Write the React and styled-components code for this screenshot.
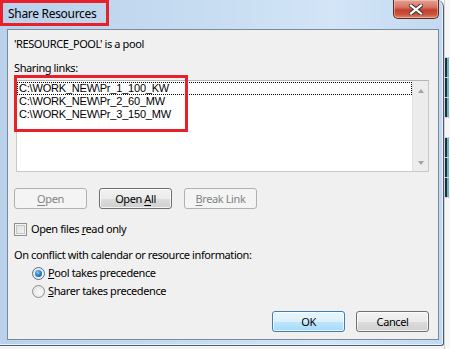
import React from "react";
import styled, { createGlobalStyle } from "styled-components";

const GlobalStyle = createGlobalStyle`
  html, body {
    margin: 0;
    padding: 0;
    background: #ececec;
  }
  * {
    box-sizing: border-box;
  }
`;

const links = ["C:\\WORK_NEW\\Pr_1_100_KW", "C:\\WORK_NEW\\Pr_2_60_MW", "C:\\WORK_NEW\\Pr_3_150_MW"];

function Mn({ children }) {
  return <u>{children}</u>;
}

export default function App() {
  return (
    <Page>
      <GlobalStyle />
      <Window>
        <TitleBar>
          <Title>Share Resources</Title>
          <CloseButton>
            <svg width="14" height="11" viewBox="0 0 14 11">
              <path
                d="M2 1.5 L12 9.5 M12 1.5 L2 9.5"
                stroke="#3b3b3b"
                strokeWidth="4.2"
                strokeLinecap="square"
              />
              <path
                d="M2 1.5 L12 9.5 M12 1.5 L2 9.5"
                stroke="#ffffff"
                strokeWidth="2.2"
                strokeLinecap="square"
              />
            </svg>
          </CloseButton>
        </TitleBar>
        <Client>
          <Label $top={6}>'RESOURCE_POOL' is a pool</Label>
          <Label $top={8}>Sharing links:</Label>
          <ListBox>
            <Items>
              {links.map((l, i) => (
                <Item key={l} $focused={i === 0}>
                  {l}
                </Item>
              ))}
            </Items>
            <ScrollBar>
              <Arrow $dir="up" />
              <Arrow $dir="down" />
            </ScrollBar>
            <ListHighlight />
          </ListBox>
          <ButtonRow>
            <Button disabled>
              <span>
                <Mn>O</Mn>pen
              </span>
            </Button>
            <Button>
              <span>
                Open <Mn>A</Mn>ll
              </span>
            </Button>
            <Button disabled>
              <span>
                <Mn>B</Mn>reak Link
              </span>
            </Button>
          </ButtonRow>
          <CheckRow>
            <CheckBox />
            <span>
              Open files <Mn>r</Mn>ead only
            </span>
          </CheckRow>
          <Label $top={10}>On conflict with calendar or resource information:</Label>
          <RadioGroup>
            <RadioRow>
              <Radio $checked />
              <span>
                <Mn>P</Mn>ool takes precedence
              </span>
            </RadioRow>
            <RadioRow>
              <Radio />
              <span>
                <Mn>S</Mn>harer takes precedence
              </span>
            </RadioRow>
          </RadioGroup>
          <Footer>
            <Button $default>
              <span>OK</span>
            </Button>
            <Button>
              <span>Cancel</span>
            </Button>
          </Footer>
        </Client>
      </Window>
      <Side>
        <SideCell />
        <SideCell $mark />
        <SideCell $mark />
        <SideCell $mark />
        <SideCell />
        <SideCell $mark />
        <SideCell $mark />
        <SideCell $mark />
      </Side>
      <TitleHighlight />
    </Page>
  );
}

const Page = styled.div`
  position: relative;
  width: 450px;
  height: 349px;
  overflow: hidden;
  display: flex;
  align-items: flex-start;
  background: #f4f4f4;
  font-family: "Noto Sans", "Open Sans", sans-serif;
  font-size: 11px;
  letter-spacing: -0.4px;
  color: #000;
`;

const Window = styled.div`
  width: 444px;
  height: 346px;
  flex-shrink: 0;
  display: flex;
  flex-direction: column;
  padding: 0 4px 5px 7px;
  background: linear-gradient(90deg, #b9d1ea 0%, #c6dcf1 45%, #d3e5f7 75%, #c2d9f1 100%);
  border-right: 1px solid #4d5e70;
  border-bottom: 1px solid #4d5e70;
  border-top-right-radius: 7px;
  border-bottom-right-radius: 3px;
  box-shadow: inset -1px 0 0 #e6f0fa, inset 0 -1px 0 #e6f0fa;
`;

const TitleBar = styled.div`
  height: 29px;
  display: flex;
  justify-content: space-between;
  align-items: flex-start;
`;

const Title = styled.div`
  margin: 6px 0 0 1px;
  font-size: 12px;
  letter-spacing: -0.3px;
  line-height: 16px;
  color: #000;
`;

const CloseButton = styled.div`
  width: 46px;
  height: 19px;
  display: flex;
  align-items: center;
  justify-content: center;
  border: 1px solid #5a2a22;
  border-top: none;
  border-radius: 0 0 5px 5px;
  background: linear-gradient(180deg, #e3a193 0%, #d57564 40%, #c4412b 55%, #c9523b 80%, #e08a6e 100%);
  box-shadow: inset 0 0 0 1px rgba(255, 210, 200, 0.5);
`;

const Client = styled.div`
  flex: 1;
  display: flex;
  flex-direction: column;
  padding: 0 9px 0 6px;
  background: #f0f0f0;
  border: 1px solid #7b8a99;
`;

const Label = styled.div`
  margin-top: ${(p) => p.$top}px;
  height: 16px;
  line-height: 16px;
  white-space: nowrap;
`;

const ListBox = styled.div`
  position: relative;
  margin: 4px 0 0 2px;
  height: 92px;
  display: flex;
  background: #fff;
  border: 1px solid #c9c9c9;
  border-top-color: #b5b5b5;
`;

const Items = styled.div`
  flex: 1;
  padding-top: 1px;
  font-family: "Liberation Sans", Arial, sans-serif;
  font-size: 11px;
  letter-spacing: -0.2px;
`;

const Item = styled.div`
  height: 13px;
  line-height: 13px;
  padding-left: 2px;
  outline: ${(p) => (p.$focused ? "1px dotted #000" : "none")};
  outline-offset: -1px;
`;

const ScrollBar = styled.div`
  width: 16px;
  display: flex;
  flex-direction: column;
  justify-content: space-between;
  align-items: center;
  padding: 8px 0 6px;
  background: #ececec;
  border-left: 1px solid #e2e2e2;
`;

const Arrow = styled.div`
  width: 0;
  height: 0;
  border-left: 3.5px solid transparent;
  border-right: 3.5px solid transparent;
  ${(p) =>
    p.$dir === "up"
      ? "border-bottom: 4px solid #a3a3a3;"
      : "border-top: 4px solid #a3a3a3;"}
`;

const ListHighlight = styled.div`
  position: absolute;
  left: -3px;
  top: -6px;
  width: 174px;
  height: 57px;
  border: 3px solid #e8202a;
`;

const TitleHighlight = styled.div`
  position: absolute;
  left: 0;
  top: 0;
  width: 109px;
  height: 26px;
  border: 3px solid #e8202a;
`;

const ButtonRow = styled.div`
  margin-top: 16px;
  display: flex;
  gap: 12px;
`;

const Button = styled.div`
  width: 73px;
  height: 21px;
  display: flex;
  align-items: center;
  justify-content: center;
  border-radius: 3px;
  white-space: nowrap;
  line-height: 16px;
  border: 1px solid ${(p) => (p.disabled ? "#adb2b5" : p.$default ? "#3c7fb1" : "#707070")};
  color: ${(p) => (p.disabled ? "#838383" : "#000")};
  background: ${(p) =>
    p.disabled
      ? "#f4f4f4"
      : p.$default
      ? "linear-gradient(180deg, #eaf6fd 0%, #d9f0fc 50%, #bee6fd 51%, #a7d9f5 100%)"
      : "linear-gradient(180deg, #f2f2f2 0%, #ebebeb 50%, #dddddd 51%, #cfcfcf 100%)"};
  box-shadow: ${(p) =>
    p.disabled ? "none" : "inset 0 0 0 1px rgba(255, 255, 255, 0.75)"};

  u {
    text-underline-offset: 2px;
  }
`;

const CheckRow = styled.div`
  margin-top: 12px;
  height: 16px;
  display: flex;
  align-items: center;
  gap: 4px;
  line-height: 16px;
`;

const CheckBox = styled.div`
  width: 13px;
  height: 13px;
  border: 1px solid #8e8f8f;
  background: linear-gradient(135deg, #dcdcdc 0%, #f6f6f6 100%);
  box-shadow: inset 0 0 0 1px #f4f4f4, inset 0 0 0 2px #c6c6c6;
`;

const RadioGroup = styled.div`
  display: flex;
  flex-direction: column;
  gap: 2px;
  margin-top: 2px;
  padding-left: 18px;
`;

const RadioRow = styled.div`
  height: 16px;
  display: flex;
  align-items: center;
  gap: 3px;
  line-height: 16px;
`;

const Radio = styled.div`
  position: relative;
  width: 13px;
  height: 13px;
  border-radius: 50%;
  border: 1px solid ${(p) => (p.$checked ? "#4f7396" : "#8e8f8f")};
  background: radial-gradient(circle at 60% 60%, #fafafa 0%, #dedede 100%);

  &::after {
    content: "";
    display: ${(p) => (p.$checked ? "block" : "none")};
    position: absolute;
    left: 2px;
    top: 2px;
    width: 7px;
    height: 7px;
    border-radius: 50%;
    background: radial-gradient(circle at 40% 35%, #7ec8f2 0%, #1f70b8 60%, #174c82 100%);
  }
`;

const Footer = styled.div`
  margin-top: 12px;
  display: flex;
  justify-content: flex-end;
  gap: 11px;
`;

const Side = styled.div`
  flex: 1;
  height: 349px;
  display: flex;
  flex-direction: column;
  padding-top: 38px;
  background: #f7f7f7;
  border-left: 1px solid #d0d0d0;
`;

const SideCell = styled.div`
  height: 20px;
  border-bottom: 1px solid #d6d6d6;
  background: ${(p) =>
    p.$mark ? "linear-gradient(90deg, #1c2f3a 0 2px, #6fb7c3 2px 4px, transparent 4px)" : "transparent"};
`;
